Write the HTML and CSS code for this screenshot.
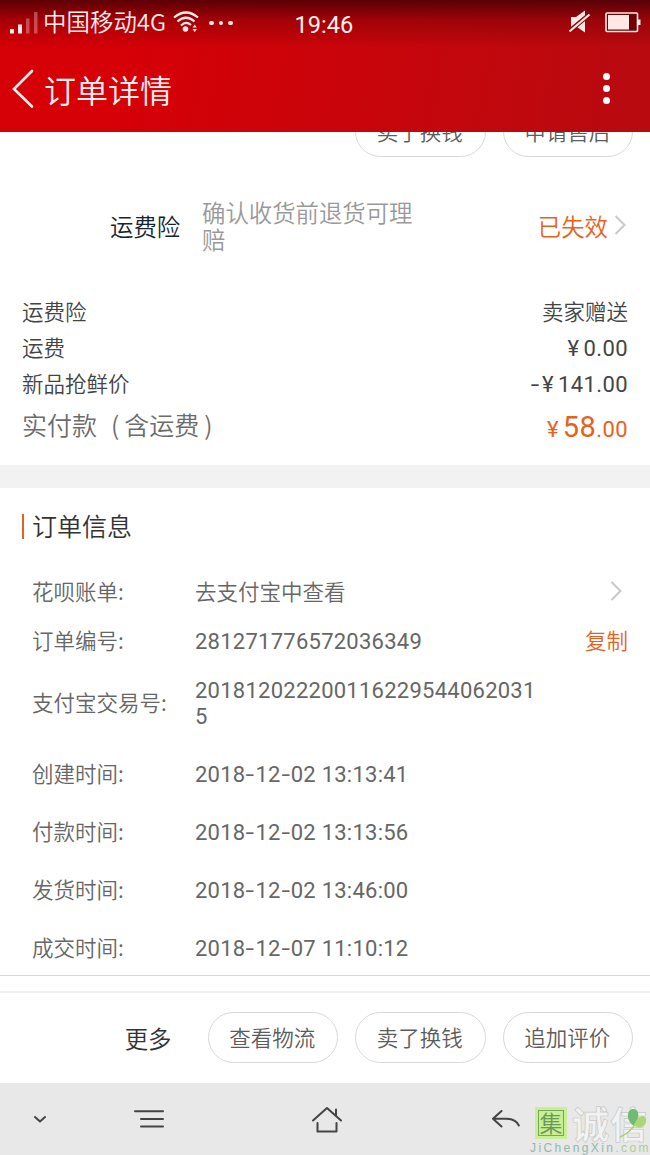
FILE: index.html
```html
<!DOCTYPE html>
<html lang="zh-CN">
<head>
  <meta charset="UTF-8" />
  <meta name="viewport" content="width=device-width, initial-scale=1.0"/>
  <title>订单详情</title>
  <link rel="stylesheet" href="styles.css">
</head>
<body>
  <!-- Header -->
  <header class="header">
    <div class="status">
      <svg class="signal" width="28" height="22" viewBox="0 0 28 22">
        <path d="M0 17h4v4.500H0zM8 12.500h4v9H8z" fill="#ffe9e5"/>
        <path d="M16 6.500h3.500v15H16zM24 0h3.500v21.500H24z" fill="#fff" opacity=".3"/>
      </svg>
      <span class="carrier">中国移动4G</span>
      <svg class="wifi" width="26" height="22" viewBox="0 0 26 22" fill="none" stroke="#ffe9e5" stroke-width="2.200">
        <path d="M1 6.500Q13 -3.500 25 6.500M4.500 10.500Q13 3 21.500 10.500M8 14.500Q13 9.500 18 14"/>
        <circle cx="12.500" cy="18" r="2.800" fill="#ffe9e5" stroke="none"/>
        <path d="M19.500 16.500l2.200-3 2.200 3zM19.500 18l2.200 3 2.200-3z" fill="#ffe9e5" stroke="none"/>
      </svg>
      <span class="dots"><i></i><i></i><i></i></span>
      <span class="clock">19:46</span>
      <svg class="mute" width="22" height="24" viewBox="0 0 22 24" fill="#ffe9e5">
        <path d="M2 7h5l9-6.500v22L8 17H2z"/>
        <path d="M0 21.500L21 4" stroke="#8c0407" stroke-width="4.500"/>
        <path d="M.5 21.500L20.500 4.500" stroke="#ffe9e5" stroke-width="2.200"/>
      </svg>
      <svg class="battery" width="36" height="21" viewBox="0 0 36 21">
        <rect x="1" y="1" width="31.500" height="18.500" rx="1" fill="#6d0305" stroke="#ffe9e5" stroke-width="1.600"/>
        <path d="M3 3h21v14.500H3zM33 7.500h2.500v5.500H33z" fill="#ffe9e5"/>
      </svg>
    </div>
    <div class="titlebar">
      <svg class="back" width="22" height="40" viewBox="0 0 22 40" fill="none" stroke="#fff0ee" stroke-width="2.600" stroke-linecap="round">
        <path d="M20 2L2 20 20 37.500"/>
      </svg>
      <h1>订单详情</h1>
      <span class="menu"><i></i><i></i><i></i></span>
    </div>
  </header>

  <!-- Order content -->
  <main class="content">
    <div class="pills pills-top">
      <button class="pill">卖了换钱</button>
      <button class="pill">申请售后</button>
    </div>

    <div class="insurance">
      <b>运费险</b>
      <p>确认收货前退货可理赔</p>
      <span class="orange">已失效</span>
      <svg class="arrow" width="12" height="20" viewBox="0 0 12 20"><path d="M1.500 1L10.500 10 1.500 19"/></svg>
    </div>

    <section class="prices">
      <div class="price"><span>运费险</span><span>卖家赠送</span></div>
      <div class="price"><span>运费</span><span class="num"><i class="yen">¥</i>0.00</span></div>
      <div class="price"><span>新品抢鲜价</span><span class="num"><i class="minus">-</i><i class="yen">¥</i>141.00</span></div>
      <div class="price total"><span>实付款<i class="paren-l">(</i>含运费<i class="paren-r">)</i></span><span class="num orange"><i class="yen">¥</i><strong>58</strong>.00</span></div>
    </section>

    <div class="divider"></div>

    <section class="info">
      <h2>订单信息</h2>
      <div class="row">
        <label>花呗账单:</label><span class="link">去支付宝中查看</span>
        <svg class="arrow" width="12" height="20" viewBox="0 0 12 20"><path d="M1.500 1L10.500 10 1.500 19"/></svg>
      </div>
      <div class="row row-short">
        <label>订单编号:</label><span class="num">281271776572036349</span>
        <a class="orange">复制</a>
      </div>
      <div class="row row-tall"><label>支付宝交易号:</label><span class="num">2018120222001162295440620315</span></div>
      <div class="row"><label>创建时间:</label><span class="num date">2018<i>-</i>12<i>-</i>02 13:13:41</span></div>
      <div class="row"><label>付款时间:</label><span class="num date">2018<i>-</i>12<i>-</i>02 13:13:56</span></div>
      <div class="row"><label>发货时间:</label><span class="num date">2018<i>-</i>12<i>-</i>02 13:46:00</span></div>
      <div class="row"><label>成交时间:</label><span class="num date">2018<i>-</i>12<i>-</i>07 11:10:12</span></div>
    </section>
  </main>

  <div class="gap"></div>

  <!-- Order actions -->
  <div class="pills actions">
    <span class="more">更多</span>
    <button class="pill">查看物流</button>
    <button class="pill">卖了换钱</button>
    <button class="pill">追加评价</button>
  </div>

  <!-- System navigation -->
  <nav class="nav">
    <svg class="nav-down" width="14" height="9" viewBox="0 0 14 9"><path d="M2 2l5 4.500L12 2"/></svg>
    <svg class="nav-list" width="30" height="20" viewBox="0 0 30 20"><path d="M1 2.300h28M7 9.900h22M7 17.500h22"/></svg>
    <svg class="nav-home" width="32" height="28" viewBox="0 0 32 28"><path d="M2 15.500L16 3l14 12.500M25 10.500V4.500M6.500 18v8.500h19V18"/></svg>
    <svg class="nav-back" width="30" height="20" viewBox="0 0 30 20"><path d="M10.500 2L2 9.700l8.500 7.800M2 9.700h13.500Q25 10 27.800 16.500"/></svg>
    <div class="watermark">
      <div class="mark-logo">
        <span class="mark-box">集</span><span class="mark-name">诚信</span>
        <svg class="leaf" width="28" height="31" viewBox="0 0 28 31">
          <path d="M15 18C6 12 8 1 14 1c7 0 7 10 1 17z" fill="#70ba71"/>
          <path d="M15 18C18 7 26 6 27 11c1 7-5 10-12 7z" fill="#abd675"/>
          <path d="M16 16Q11 25 1 29" fill="none" stroke="#a5d26e" stroke-width="1.500"/>
        </svg>
      </div>
      <div class="mark-url">JiChengXin<em>.com</em></div>
    </div>
  </nav>
</body>
</html>
```

FILE: styles.css
```css
* {
  box-sizing: border-box;
}

body {
  margin: 0;
  width: 650px;
  height: 1155px;
  overflow: hidden;
  display: flex;
  flex-direction: column;
  background: #fff;
  color: #666;
  font-family: "Noto Sans CJK SC", sans-serif;
  font-size: 21.5px;
  font-weight: 350;
}

h1, h2, p {
  margin: 0;
  font-weight: 350;
}

i, em {
  font-style: normal;
}

svg {
  flex: none;
}

.orange {
  color: #e8611c;
}

.num {
  font-family: Roboto, "Noto Sans CJK SC", sans-serif;
  font-size: 22px;
  font-weight: 400;
  letter-spacing: 0.25px;
}

/* Header */
.header {
  height: 132px;
  flex: none;
  color: #fff0ee;
  background:
    linear-gradient(rgba(70, 0, 5, 0.85), rgba(120, 0, 5, 0.5) 20px, rgba(160, 0, 5, 0) 48px),
    linear-gradient(100deg, #d60007 20%, #b90a0f 95%);
}

.status {
  height: 46px;
  display: flex;
  align-items: center;
  padding-left: 10px;
}

.carrier {
  width: 124px;
  margin-left: 5px;
  margin-top: -4px;
  font-size: 23.4px;
  line-height: 44px;
  letter-spacing: 0.1px;
  white-space: nowrap;
}

.wifi {
  margin: -2px 0 0 6px;
}

.dots {
  display: flex;
  gap: 5px;
  margin-left: 10px;
}

.dots i {
  width: 4.5px;
  height: 4.5px;
  border-radius: 50%;
  background: #ffe9e5;
}

.clock {
  width: 60px;
  margin: 3px 0 0 62px;
  font-family: Roboto, sans-serif;
  font-size: 23.6px;
  font-weight: 400;
}

.mute {
  margin-left: 214px;
  margin-top: -2px;
}

.battery {
  margin-left: 14px;
  margin-top: -1px;
}

.titlebar {
  height: 86px;
  display: flex;
  align-items: center;
  padding: 0 40px 0 12px;
}

.titlebar h1 {
  margin-left: 10px;
  margin-top: -1px;
  font-size: 32px;
  line-height: 48px;
}

.back {
  margin-top: -1px;
}

.menu {
  display: flex;
  flex-direction: column;
  gap: 5px;
  margin: -2px 0 0 auto;
}

.menu i {
  width: 7px;
  height: 7px;
  border-radius: 50%;
  background: #fff;
}

/* Content */
.content {
  height: 844px;
  flex: none;
  overflow: hidden;
  border-bottom: 1px solid #d8d8d8;
}

.pills {
  display: flex;
  align-items: center;
  justify-content: flex-end;
  gap: 17px;
  padding-right: 17px;
}

.pills-top {
  height: 51px;
  margin-top: -26px;
}

.pill {
  width: 130.5px;
  height: 51px;
  padding: 0 1px 2px 0;
  border: 1px solid #d8d8d8;
  border-radius: 26px;
  background: #fff;
  color: #5c5c5c;
  font: inherit;
}

.insurance {
  height: 138px;
  display: flex;
  align-items: center;
  padding: 0 24px 0 110px;
  font-size: 23.4px;
  line-height: 27px;
}

.insurance b {
  width: 92px;
  color: #152530;
  font-weight: 350;
}

.insurance p {
  width: 215px;
  color: #999;
}

.insurance .orange {
  margin-left: auto;
  margin-right: 6px;
}

.arrow {
  fill: none;
  stroke: #c8c8c8;
  stroke-width: 2;
}

.insurance .arrow {
  margin-top: -2px;
}

/* Prices */
.prices {
  height: 170px;
  padding: 0 22px;
  color: #444;
}

.price {
  height: 36px;
  display: flex;
  align-items: center;
  justify-content: space-between;
}

.price span {
  padding-bottom: 5px;
}

.price .num {
  padding-bottom: 1px;
  letter-spacing: 0.4px;
}

.yen {
  margin-right: 4px;
}

.minus {
  display: inline-block;
  margin-right: 4px;
  transform: scaleX(1.4);
}

.total {
  height: 48px;
  font-size: 25px;
  color: #6c6c6c;
}

.total span {
  padding-bottom: 6px;
}

.total .num {
  padding-bottom: 0;
  font-size: 22px;
}

.total strong {
  font-size: 29px;
  font-weight: 400;
}

.paren-l {
  margin: 0 5px 0 14px;
}

.paren-r {
  margin-left: 5px;
}

.divider {
  height: 23px;
  background: #f2f2f2;
}

/* Order info */
.info {
  padding: 26px 22px 0;
}

.info h2 {
  height: 25px;
  margin-bottom: 24px;
  padding-left: 8px;
  border-left: 2px solid #e8611c;
  color: #333;
  font-size: 25px;
  line-height: 23px;
}

.row {
  height: 58px;
  display: flex;
  align-items: center;
  padding-left: 10px;
  line-height: 26px;
}

.row-short {
  height: 41px;
}

.row-tall {
  height: 83px;
}

.row label {
  width: 163px;
  padding-bottom: 3px;
}

.row span {
  width: 345px;
  word-break: break-all;
}

.row .num {
  padding-top: 1px;
}

.row .link {
  padding-bottom: 2px;
}

.row .arrow {
  margin: -2px 6px 0 auto;
}

.row a {
  margin-left: auto;
  padding-bottom: 3px;
}

.date i {
  display: inline-block;
  width: 10px;
  text-align: center;
  transform: scaleX(1.4);
}

/* Footer */
.gap {
  height: 17px;
  flex: none;
  border-bottom: 2px solid #f0f0f0;
}

.actions {
  height: 90px;
  flex: none;
  padding-bottom: 1px;
}

.more {
  margin-right: 19px;
  color: #333;
  font-size: 23.4px;
}

.nav {
  position: relative;
  height: 72px;
  flex: none;
  display: flex;
  align-items: center;
  padding-left: 33px;
  background: #e8e8e8;
}

.nav > svg {
  fill: none;
  stroke: #444;
  stroke-width: 2;
  stroke-linecap: round;
  stroke-linejoin: round;
}

.nav-list {
  margin-left: 87px;
}

.nav-home {
  margin-left: 147px;
}

.nav-back {
  margin-left: 148px;
}

/* Watermark lies over the navigation bar */
.watermark {
  position: absolute;
  left: 530px;
  top: 22px;
  width: 120px;
}

.mark-logo {
  display: flex;
  align-items: center;
  height: 36px;
  padding-left: 5px;
}

.mark-box {
  width: 32px;
  height: 32px;
  flex: none;
  border: 2px solid #c9ee93;
  outline: 1.5px solid #75a660;
  outline-offset: -4px;
  background: #c9ee93;
  color: #659b55;
  font-size: 23px;
  font-weight: 350;
  line-height: 26px;
  text-align: center;
}

.mark-name {
  margin-left: 5px;
  color: #f2f2f2;
  font-size: 37px;
  font-weight: 700;
  line-height: 32px;
  letter-spacing: 1px;
  white-space: nowrap;
  -webkit-text-stroke: 0.7px #c8c8c8;
}

.leaf {
  position: absolute;
  right: 3px;
  top: 3px;
}

.mark-url {
  color: #8fb9ac;
  font-family: "Liberation Sans", sans-serif;
  font-size: 12px;
  font-weight: 400;
  line-height: 14px;
  letter-spacing: 2.4px;
  white-space: nowrap;
}

.mark-url em {
  color: #a9cf8f;
}
```
